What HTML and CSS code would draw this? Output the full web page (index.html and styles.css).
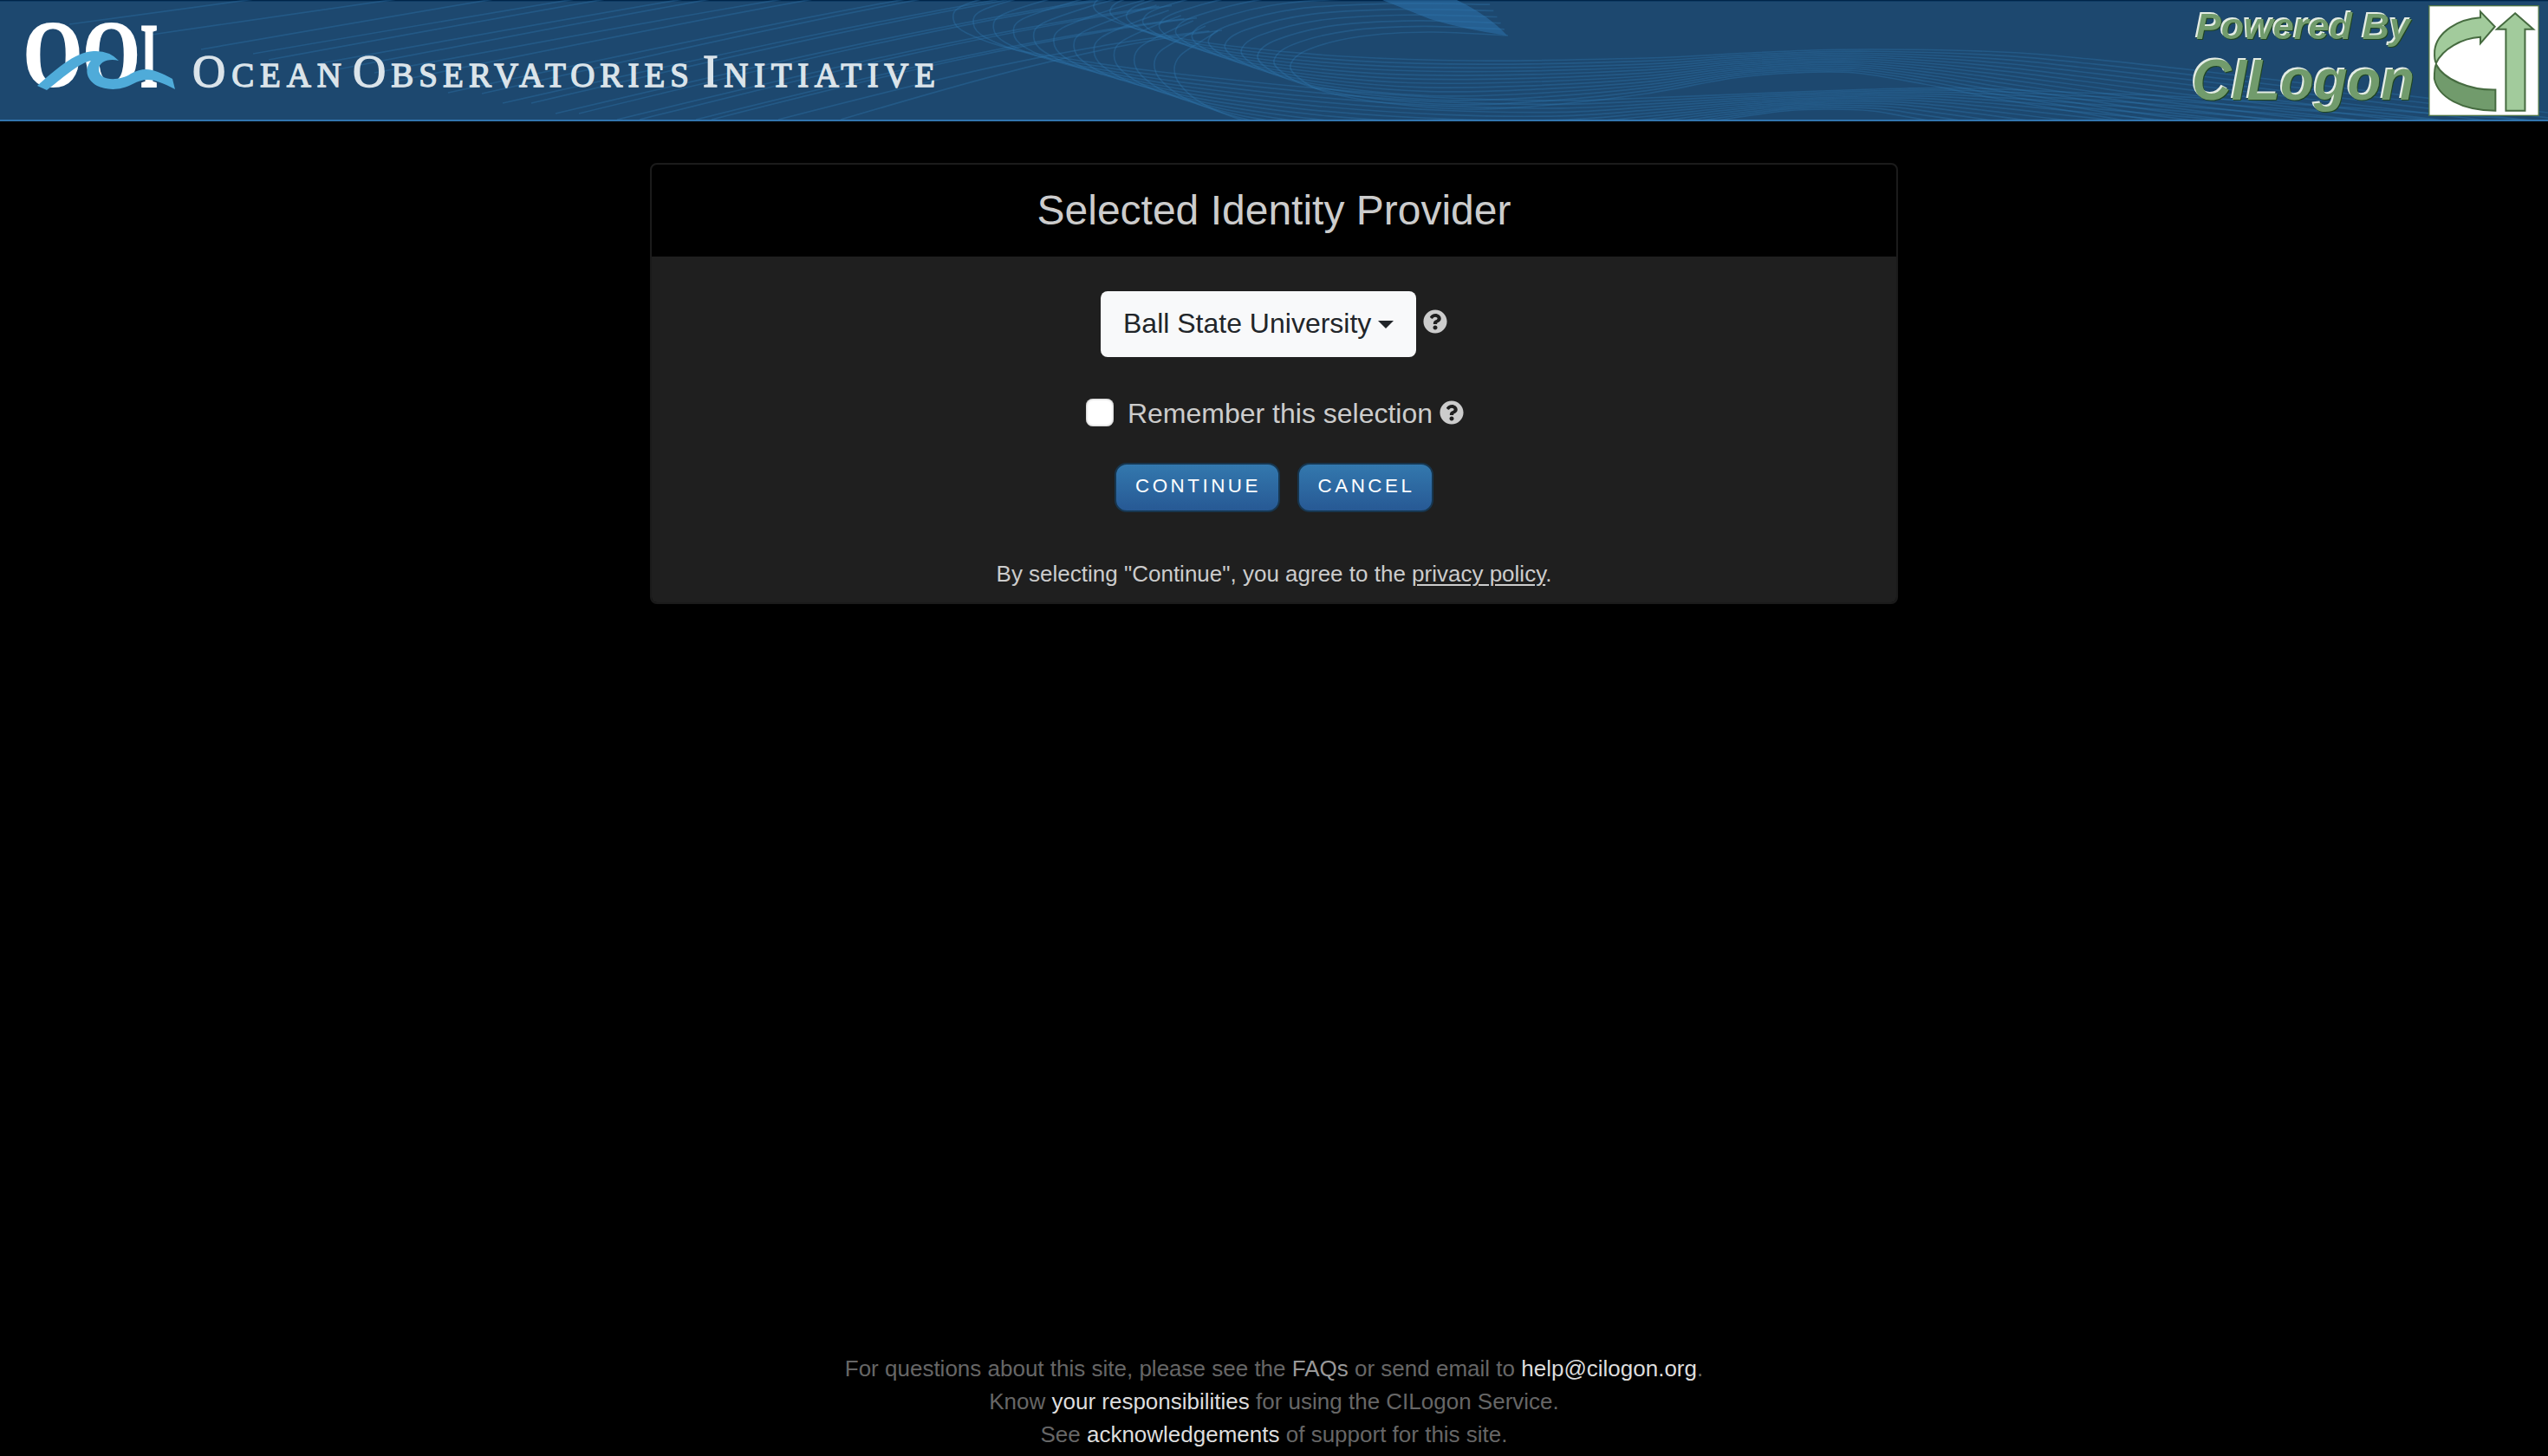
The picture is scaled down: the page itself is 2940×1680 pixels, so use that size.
FILE: index.html
```html
<!DOCTYPE html>
<html lang="en">
<head>
<meta charset="utf-8">
<title>CILogon - Selected Identity Provider</title>
<link rel="stylesheet" href="styles.css">
</head>
<body>
<header class="banner">
  <svg class="waves" id="waves" viewBox="0 0 2940 138" aria-hidden="true">
    <path class="wave-tip" d="M1595 0 L1681 0 Q1718 18 1739 41 Q1690 34 1650 22 Z"/>
  </svg>
  <svg class="brand" viewBox="0 0 1100 138" role="img" aria-label="Ocean Observatories Initiative">
    <g class="mark">
      <text x="27" y="99" textLength="68" lengthAdjust="spacingAndGlyphs" font-size="107">O</text>
      <text x="95.500" y="99" textLength="66" lengthAdjust="spacingAndGlyphs" font-size="107">O</text>
      <text x="162" y="99.500" textLength="20" lengthAdjust="spacingAndGlyphs" font-size="105">I</text>
    </g>
    <path class="swell" d="M43 99 C62 82 86 60 108 59 Q126 58 137 70 C124 67 114 72 114 80 C114 94 138 94 151 85 C168 76 178 80 199 91 L202 103 C180 92 170 88 153 97 C136 106 121 103 112 99 C98 91 98 78 105 70 C90 73 70 92 54 104 Z"/>
    <g class="name">
      <text x="222" y="99.500" textLength="172">O<tspan class="sc">CEAN</tspan></text>
      <text x="407" y="99.500" textLength="388">O<tspan class="sc">BSERVATORIES</tspan></text>
      <text x="811" y="99.500" textLength="268">I<tspan class="sc">NITIATIVE</tspan></text>
    </g>
  </svg>
  <div class="powered">
    <svg class="powered-text" viewBox="2520 0 280 138" role="img" aria-label="Powered By CILogon">
      <text x="2534" y="45" font-size="43" textLength="247" lengthAdjust="spacingAndGlyphs">Powered By</text>
      <text x="2529" y="114.500" font-size="67" textLength="257" lengthAdjust="spacingAndGlyphs">CILogon</text>
    </svg>
    <svg class="badge" viewBox="907 18 382 383" aria-hidden="true">
      <rect x="909" y="20" width="378" height="379" fill="#fff" stroke="#4d7345" stroke-width="4"/>
      <g stroke="#466b40" stroke-width="6">
        <path fill="#a2cb9c" d="M1086 40 L1136 92 L1086 150 V128 C1020 132 955 170 933 218 C927 208 927 195 928 175 C935 110 1010 66 1086 61 Z"/>
        <path fill="#719b6c" d="M933 222 C927 235 927 250 927 272 C940 335 1020 382 1138 382 V310 C1050 312 960 275 933 222 Z"/>
        <path fill="#a2cb9c" d="M1206 46 L1269 101 H1240 V382 H1174 V101 H1143 Z"/>
      </g>
    </svg>
  </div>
</header>

<main class="card">
  <h1 class="card-title">Selected Identity Provider</h1>
  <div class="card-body">
    <div class="row provider">
      <button class="dropdown" type="button">Ball State University<span class="caret"></span></button>
      <svg class="help" viewBox="0 0 512 512"><use href="#question"/></svg>
    </div>
    <div class="row remember">
      <span class="checkbox"></span>
      <span class="label">Remember this selection</span>
      <svg class="help" viewBox="0 0 512 512"><use href="#question"/></svg>
    </div>
    <div class="row actions">
      <button class="btn continue" type="button">CONTINUE</button>
      <button class="btn cancel" type="button">CANCEL</button>
    </div>
    <p class="policy">By selecting "Continue", you agree to the <a href="#">privacy policy</a>.</p>
  </div>
</main>

<footer class="footer">
  <p>For questions about this site, please see the <a class="visited" href="#">FAQs</a> or send email to <a href="#">help@cilogon.org</a>.</p>
  <p>Know <a href="#">your responsibilities</a> for using the CILogon Service.</p>
  <p>See <a href="#">acknowledgements</a> of support for this site.</p>
</footer>

<svg class="defs" width="0" height="0" aria-hidden="true">
  <symbol id="question" viewBox="0 0 512 512">
    <path d="M504 256c0 137-111 248-248 248S8 393 8 256C8 119.100 119 8 256 8s248 111.100 248 248zM262.700 90c-54.500 0-89.300 23-116.500 63.800-3.500 5.300-2.400 12.400 2.700 16.300l34.700 26.300c5.200 3.900 12.600 3 16.700-2.100 17.900-22.700 30.100-35.800 57.300-35.800 20.400 0 45.700 13.100 45.700 33 0 15-12.400 22.700-32.500 34C247.100 238.500 216 254.900 216 296v4c0 6.600 5.400 12 12 12h56c6.600 0 12-5.400 12-12v-1.300c0-28.500 83.200-29.600 83.200-106.700 0-58-60.200-102-116.500-102zM256 338c-25.400 0-46 20.600-46 46s20.600 46 46 46 46-20.600 46-46-20.600-46-46-46z"/>
  </symbol>
</svg>
<script src="waves.js"></script>
</body>
</html>
```
FILE: styles.css
```css
* { box-sizing: border-box; }

body {
  margin: 0;
  min-height: 1680px;
  display: flex;
  flex-direction: column;
  align-items: center;
  background: #000;
  color: #ccc;
  font-family: "Liberation Sans", Arial, sans-serif;
  font-size: 32px;
}

p { margin: 0; }

.banner {
  position: relative;
  width: 100%;
  height: 140px;
  display: flex;
  justify-content: space-between;
  background: linear-gradient(#002549 0, #002549 1px, #103c64 1px, #103c64 2px, #1d486f 2px);
  border-bottom: 2px solid #3275ae;
}

.waves {
  position: absolute;
  inset: 0;
  width: 2940px;
  height: 138px;
}
.waves path { fill: none; stroke: #2f76b0; stroke-opacity: .36; stroke-width: 1.7; }
.waves .wave-tip { fill: #2c70a8; fill-opacity: .6; stroke: none; }

.brand { position: relative; width: 1100px; height: 138px; }
.brand text { font-family: "Liberation Serif", serif; }
.mark text { fill: #fff; stroke: #fff; stroke-width: 2; font-weight: bold; }
.swell { fill: #4fabd9; }
.name text { fill: #dbe4ea; stroke: #dbe4ea; stroke-width: 1.3; font-size: 53px; }
.name .sc { font-size: 39px; }

.powered { position: relative; display: flex; padding-right: 10px; }
.powered-text { width: 280px; height: 138px; margin-right: 2px; overflow: visible; }
.powered-text text {
  fill: #719b6c;
  font-family: "Liberation Sans", sans-serif;
  font-weight: bold;
  font-style: italic;
  filter: drop-shadow(-1.2px -1.2px .3px #e4ece4) drop-shadow(1.6px 1.8px .4px #1f4522);
}
.badge { width: 128px; height: 128px; margin-top: 6px; }

.card {
  width: 1440px;
  height: 509px;
  margin-top: 48px;
  border: 2px solid #1b1b1b;
  border-radius: 8px;
  overflow: hidden;
}
.card-title {
  margin: 0;
  height: 106px;
  line-height: 106px;
  font-size: 48px;
  font-weight: normal;
  text-align: center;
}
.card-body {
  height: 399px;
  padding-top: 40px;
  display: flex;
  flex-direction: column;
  align-items: center;
  background: #1f1f1f;
}
.row { display: flex; align-items: center; }
.help { width: 28px; height: 28px; fill: #ccc; }

.provider { height: 76px; gap: 8px; }
.provider .help { margin-bottom: 6px; }
.dropdown {
  width: 364px;
  height: 76px;
  padding: 0 26px 2px;
  display: flex;
  align-items: center;
  justify-content: space-between;
  border: 0;
  border-radius: 8px;
  background: #f8f9fa;
  color: #212529;
  font: 32px "Liberation Sans", Arial, sans-serif;
  white-space: nowrap;
}
.caret {
  border: 9px solid transparent;
  border-top-color: #212529;
  border-bottom: 0;
  margin-top: 2px;
}

.remember { height: 48px; margin: 40px 0 0 2px; }
.checkbox {
  width: 32px;
  height: 32px;
  margin-right: 16px;
  border-radius: 8px;
  background: #fff;
  box-shadow: inset 0 0 3px #999;
}
.label { margin-right: 8px; padding-top: 1px; line-height: 36px; }

.actions { margin-top: 34px; gap: 20px; }
.btn {
  height: 57px;
  padding: 0 0 4px 2px;
  border: 2px solid #17364f;
  border-radius: 14px;
  background: linear-gradient(#3378ae, #275994);
  color: #fff;
  font: 22.400px "Liberation Sans", Arial, sans-serif;
  letter-spacing: 3.500px;
}
.continue { width: 191px; }
.cancel { width: 157px; }

.policy { margin-top: 52px; font-size: 26px; line-height: 38px; }
.policy a { color: inherit; text-decoration-thickness: 2px; text-underline-offset: 3px; }

.footer {
  margin-top: auto;
  padding-bottom: 6px;
  color: #666;
  font-size: 26px;
  line-height: 38px;
  text-align: center;
}
.footer a { color: #ddd; text-decoration: none; }
.footer .visited { color: #999; }

.defs { position: absolute; }
```
FILE: waves.js
```js
// Line-art currents in the banner: each band blends from one edge curve to the other.
const svg = document.getElementById('waves');

function smooth(pts) {
  let d = `M${pts[0]}`;
  for (let i = 0; i < pts.length - 1; i++) {
    const p0 = pts[i - 1] || pts[i], p1 = pts[i], p2 = pts[i + 1], p3 = pts[i + 2] || p2;
    const c = k => [p1[k] + (p2[k] - p0[k]) / 6, p2[k] - (p3[k] - p1[k]) / 6];
    const [ax, bx] = c(0), [ay, by] = c(1);
    d += `C${ax} ${ay} ${bx} ${by} ${p2}`;
  }
  return d;
}

function draw(d) {
  const path = document.createElementNS('http://www.w3.org/2000/svg', 'path');
  path.setAttribute('d', d);
  svg.appendChild(path);
}

function band(first, last, count) {
  for (let i = 0; i < count; i++) {
    const t = i / (count - 1);
    draw(smooth(first.map((p, k) => [p[0] + (last[k][0] - p[0]) * t, p[1] + (last[k][1] - p[1]) * t])));
  }
}

// Upper current
band(
  [[1690,-45],[1560,-42],[1400,-35],[1290,-10],[1262,6],[1280,22],[1330,38],[1420,53],[1550,65],[1700,70],[1900,67],[2000,62],[2090,58],[2160,57],[2250,58],[2330,61],[2400,67],[2540,82],[2940,130]],
  [[1740,41],[1650,37],[1570,42],[1510,57],[1489,75],[1500,91],[1530,106],[1600,119],[1700,126],[1800,120],[1900,108],[2000,90],[2070,84],[2140,84],[2220,97],[2300,113],[2400,130],[2540,152],[2940,200]],
  13
);

// Lower current
band(
  [[1250,-30],[1180,-14],[1112,6],[1100,22],[1115,38],[1170,57],[1260,72],[1340,83],[1500,100],[1650,112],[1800,116],[1900,113],[2000,109],[2100,105],[2200,102],[2280,102],[2400,107],[2540,113],[2940,140]],
  [[1405,36],[1387,47],[1362,64],[1355,80],[1362,98],[1385,118],[1420,134],[1470,148],[1560,162],[1700,168],[1800,165],[1900,152],[2000,136],[2060,128],[2110,126],[2160,128],[2220,138],[2400,165],[2940,230]],
  12
);

// Long streaks rising to the right
const starts = [[80,28],[175,40],[232,57],[292,62],[310,69],[370,73],[390,80],[432,84],[450,95],[517,107],[556,108],[580,119],[613,119],[641,131],[668,131],[712,138],[738,138],[803,138],[821,138],[898,138],[970,138]];
starts.forEach(([x, y], i) => {
  const t = i / (starts.length - 1), ex = 1120 + 290 * t, ey = -105 + 143 * t + (i % 2 ? 5 : -3);
  const bow = 4 + 14 * t;
  draw(`M${x} ${y}C${x + (ex - x) / 3} ${y + (ey - y) / 3 - bow / 2} ${x + (ex - x) * 2 / 3} ${y + (ey - y) * 2 / 3 - bow} ${ex} ${ey}`);
});
```
